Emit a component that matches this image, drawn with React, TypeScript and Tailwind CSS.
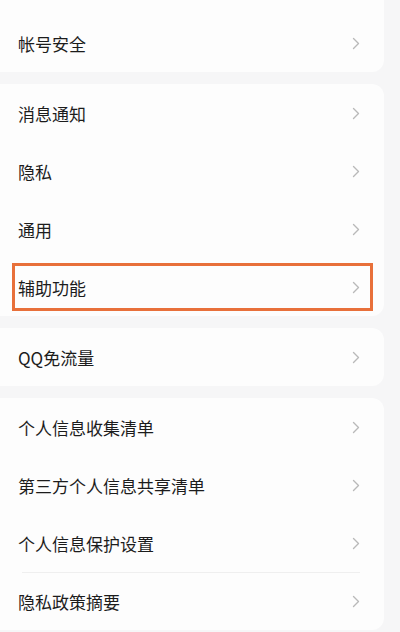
import React from "react";

type Group = { items: string[]; dividerBefore?: number; first?: boolean };

const groups: Group[] = [
  { items: ["帐号安全"], first: true },
  { items: ["消息通知", "隐私", "通用", "辅助功能"] },
  { items: ["QQ免流量"] },
  { items: ["个人信息收集清单", "第三方个人信息共享清单", "个人信息保护设置", "隐私政策摘要"], dividerBefore: 3 },
];

function Chevron() {
  return (
    <svg width="8" height="13" viewBox="0 0 8 13" fill="none" className="shrink-0">
      <path d="M1.5 1.5L6.5 6.5L1.5 11.5" stroke="#b9b9b9" strokeWidth="1.4" strokeLinecap="round" strokeLinejoin="round" />
    </svg>
  );
}

function Row({ label, highlight, divider }: { label: string; highlight?: boolean; divider?: boolean }) {
  return (
    <div className="relative flex h-[58px] items-center justify-between pl-[18px] pr-[24px]">
      {divider && <div className="absolute left-[22px] right-[24px] top-0 h-px bg-[#efefef]" />}
      <span className="text-[17px] leading-none text-[#1c1c1c]">{label}</span>
      <Chevron />
      {highlight && (
        <div className="absolute left-[12px] right-[11px] top-[5px] bottom-[5px] border-[3px] border-[#e8703a]" />
      )}
    </div>
  );
}

export default function App() {
  return (
    <div
      className="flex h-[632px] w-[400px] flex-col gap-[12px] overflow-hidden bg-[#f6f6f7]"
      style={{ fontFamily: '"Noto Sans CJK SC", "Noto Sans", sans-serif' }}
    >
      {groups.map((g, gi) => (
        <div
          key={gi}
          className={`w-[384px] shrink-0 bg-[#fdfdfd] ${g.first ? "rounded-br-[12px] pt-[14px]" : "rounded-r-[12px]"}`}
        >
          {g.items.map((label, i) => (
            <Row key={label} label={label} highlight={label === "辅助功能"} divider={g.dividerBefore === i} />
          ))}
        </div>
      ))}
    </div>
  );
}
